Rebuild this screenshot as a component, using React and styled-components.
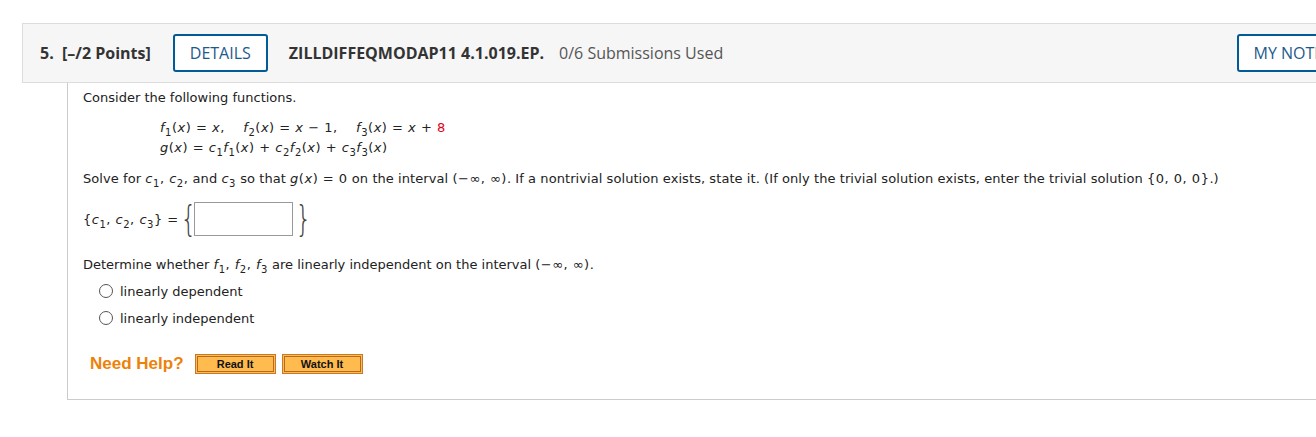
import React from 'react';
import styled, { createGlobalStyle } from 'styled-components';

const GlobalStyle = createGlobalStyle`
	html, body {
		margin: 0;
		padding: 0;
		background: #fff;
		overflow: hidden;
	}
`;

const Page = styled.div`
	padding: 23px 0 0 22px;
	width: 1400px;
`;

const Header = styled.div`
	display: flex;
	align-items: center;
	width: 1345px;
	height: 60px;
	box-sizing: border-box;
	padding: 0 17px;
	background: #f6f6f6;
	border: 1px solid #dcdcdc;
	font-family: 'Open Sans', sans-serif;
	color: #333;
`;

const Points = styled.span`
	font-size: 16px;
	font-weight: 700;
	white-space: pre;
`;

const OutlineButton = styled.button`
	margin-left: ${p => p.$ml || 0}px;
	margin-right: ${p => p.$mr || 0}px;
	height: 38px;
	padding: 0 15px;
	background: #fff;
	border: 2px solid #005b96;
	border-radius: 3px;
	font-family: 'Open Sans', sans-serif;
	font-size: 16px;
	color: #1c5a8c;
	cursor: pointer;
`;

const Code = styled.span`
	font-size: 16px;
	font-weight: 700;
	margin-right: 15px;
`;

const Used = styled.span`
	font-size: 16px;
	color: #555;
`;

const Body = styled.div`
	margin-left: 45px;
	height: 317px;
	box-sizing: border-box;
	border-left: 1px solid #ccc;
	border-bottom: 1px solid #ccc;
	padding: 7px 15px;
	font-family: 'DejaVu Sans', Verdana, sans-serif;
	font-size: 13px;
	color: #222;
`;

const Para = styled.div`
	line-height: 16px;
	margin: ${p => p.$mt || 0}px 0 0 ${p => p.$ml || 0}px;
	white-space: pre;
	letter-spacing: ${p => p.$ls || 0}px;
`;

const Math = styled.span`
	letter-spacing: 0.5px;
`;

const V = styled.i`
	font-style: italic;
`;

const Sub = styled.sub`
	font-size: 10px;
	vertical-align: -4px;
	line-height: 0;
`;

const Red = styled.span`
	color: #e0001b;
`;

const AnswerRow = styled.div`
	display: flex;
	align-items: center;
	margin-top: 13px;
	height: 38px;
	white-space: pre;
`;

const Brace = styled.span`
	font-family: 'DejaVu Sans', sans-serif;
	font-size: 36px;
	font-weight: 200;
	line-height: 38px;
	color: #444;
	transform: scaleX(0.7);
	margin: ${p => p.$m};
`;

const AnswerBox = styled.input`
	width: 99px;
	height: 34px;
	box-sizing: border-box;
	border: 1px solid #999;
	background: #fff;
	margin: 0;
`;

const RadioRow = styled.label`
	display: flex;
	align-items: center;
	margin: ${p => p.$mt}px 0 0 16px;
	height: 16px;
	gap: 7px;
`;

const RadioDot = styled.span`
	width: 12px;
	height: 12px;
	border: 1px solid #555;
	border-radius: 50%;
	background: #fff;
`;

const HelpRow = styled.div`
	display: flex;
	align-items: center;
	margin: 28px 0 0 7px;
	gap: 6px;
`;

const HelpLabel = styled.span`
	font-family: 'Liberation Sans', Arial, sans-serif;
	font-weight: 700;
	font-size: 17px;
	color: #ec8209;
	margin-right: 5px;
`;

const HelpButton = styled.span`
	display: inline-block;
	padding: 1px;
	background: #ffbb4d;
	border: 1px solid #c8782a;
`;

const HelpInner = styled.span`
	display: block;
	width: ${p => p.$w}px;
	height: 14px;
	line-height: 14px;
	text-align: center;
	border: 1px solid #b8691c;
	font-family: 'Liberation Sans', Arial, sans-serif;
	font-weight: 700;
	font-size: 11px;
	color: #111;
`;

export default function App() {
	return (
		<Page>
			<GlobalStyle />
			<Header>
				<Points>5.  [–/2 Points]</Points>
				<OutlineButton $ml={22} $mr={21}>DETAILS</OutlineButton>
				<Code>ZILLDIFFEQMODAP11 4.1.019.EP.</Code>
				<Used>0/6 Submissions Used</Used>
				<OutlineButton style={{ marginLeft: 'auto' }}>MY NOTES</OutlineButton>
			</Header>
			<Body>
				<Para>Consider the following functions.</Para>
				<Para $mt={14} $ml={77}>
					<Math><V>f</V><Sub>1</Sub>(<V>x</V>) = <V>x</V>,    <V>f</V><Sub>2</Sub>(<V>x</V>) = <V>x</V> − 1,    <V>f</V><Sub>3</Sub>(<V>x</V>) = <V>x</V> + <Red>8</Red></Math>
				</Para>
				<Para $mt={4} $ml={77}>
					<Math><V>g</V>(<V>x</V>) = <V>c</V><Sub>1</Sub><V>f</V><Sub>1</Sub>(<V>x</V>) + <V>c</V><Sub>2</Sub><V>f</V><Sub>2</Sub>(<V>x</V>) + <V>c</V><Sub>3</Sub><V>f</V><Sub>3</Sub>(<V>x</V>)</Math>
				</Para>
				<Para $mt={15} $ls={0.07}>
					Solve for <Math><V>c</V><Sub>1</Sub>, <V>c</V><Sub>2</Sub>,</Math> and <Math><V>c</V><Sub>3</Sub></Math> so that <Math><V>g</V>(<V>x</V>) = 0</Math> on the interval <Math>(−∞, ∞)</Math>. If a nontrivial solution exists, state it. (If only the trivial solution exists, enter the trivial solution <Math>{'{'}0, 0, 0{'}'}</Math>.)
				</Para>
				<AnswerRow>
					<Math>{'{'}<V>c</V><Sub>1</Sub>, <V>c</V><Sub>2</Sub>, <V>c</V><Sub>3</Sub>{'}'} =</Math>
					<Brace $m="0 -6px 0 -2px">{'{'}</Brace>
					<AnswerBox type="text" />
					<Brace $m="0 0 0 -1px">{'}'}</Brace>
				</AnswerRow>
				<Para $mt={19}>
					Determine whether <Math><V>f</V><Sub>1</Sub>, <V>f</V><Sub>2</Sub>, <V>f</V><Sub>3</Sub></Math> are linearly independent on the interval <Math>(−∞, ∞)</Math>.
				</Para>
				<RadioRow $mt={10}><RadioDot />linearly dependent</RadioRow>
				<RadioRow $mt={11}><RadioDot />linearly independent</RadioRow>
				<HelpRow>
					<HelpLabel>Need Help?</HelpLabel>
					<HelpButton><HelpInner $w={75}>Read It</HelpInner></HelpButton>
					<HelpButton><HelpInner $w={75}>Watch It</HelpInner></HelpButton>
				</HelpRow>
			</Body>
		</Page>
	);
}
